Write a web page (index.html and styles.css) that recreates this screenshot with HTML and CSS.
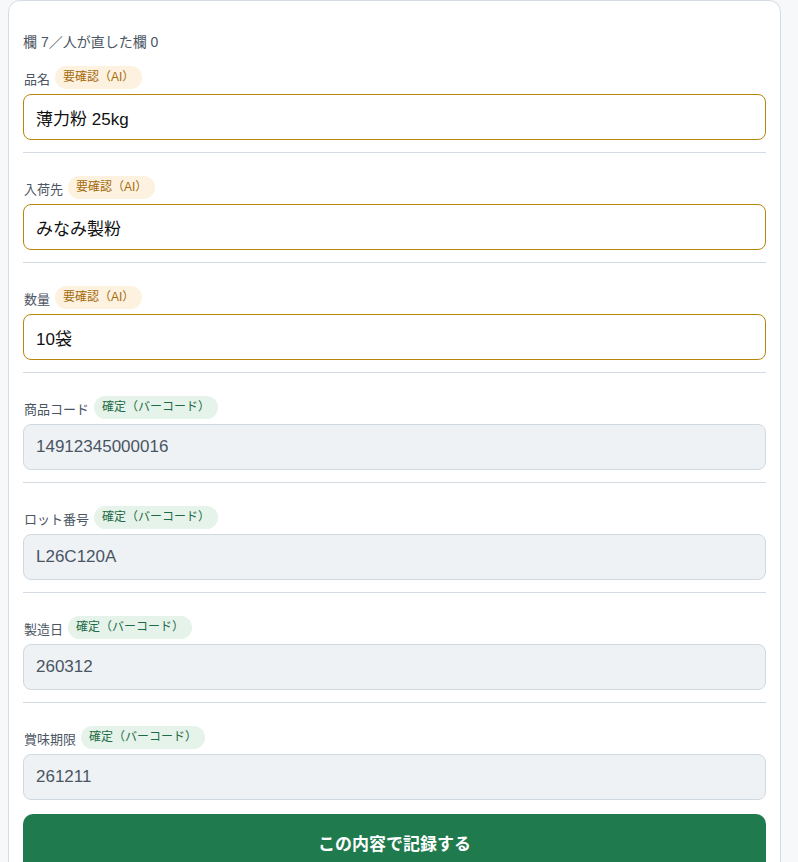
FILE: index.html
```html
<!DOCTYPE html>
<html lang="ja">
<head>
<meta charset="utf-8">
<title>記録確認</title>
<link rel="stylesheet" href="styles.css">
</head>
<body>
<div class="card">
  <div class="summary">欄 7／人が直した欄 0</div>

  <div class="field">
    <div class="label-row"><span class="label">品名</span><span class="badge badge-ai">要確認（AI）</span></div>
    <input class="input input-ai" type="text" value="薄力粉 25kg">
  </div>

  <div class="field">
    <div class="label-row"><span class="label">入荷先</span><span class="badge badge-ai">要確認（AI）</span></div>
    <input class="input input-ai" type="text" value="みなみ製粉">
  </div>

  <div class="field">
    <div class="label-row"><span class="label">数量</span><span class="badge badge-ai">要確認（AI）</span></div>
    <input class="input input-ai" type="text" value="10袋">
  </div>

  <div class="field">
    <div class="label-row"><span class="label">商品コード</span><span class="badge badge-ok">確定（バーコード）</span></div>
    <input class="input input-ok" type="text" value="14912345000016" readonly>
  </div>

  <div class="field">
    <div class="label-row"><span class="label">ロット番号</span><span class="badge badge-ok">確定（バーコード）</span></div>
    <input class="input input-ok" type="text" value="L26C120A" readonly>
  </div>

  <div class="field">
    <div class="label-row"><span class="label">製造日</span><span class="badge badge-ok">確定（バーコード）</span></div>
    <input class="input input-ok" type="text" value="260312" readonly>
  </div>

  <div class="field field-last">
    <div class="label-row"><span class="label">賞味期限</span><span class="badge badge-ok">確定（バーコード）</span></div>
    <input class="input input-ok" type="text" value="261211" readonly>
  </div>

  <button class="submit" type="button">この内容で記録する</button>
</div>
</body>
</html>
```

FILE: styles.css
```css
html, body {
  margin: 0;
  padding: 0;
  background: #f6f8fa;
}

body {
  font-family: "Liberation Sans", "Noto Sans CJK JP", sans-serif;
  color: #1f2933;
}

.card {
  box-sizing: border-box;
  width: 773px;
  margin: 0 0 0 8px;
  background: #ffffff;
  border: 1px solid #d5dbe3;
  border-radius: 12px;
  padding: 31px 14px 40px 14px;
}

.summary {
  font-size: 14px;
  line-height: 20px;
  color: #4b5563;
  margin-bottom: 14px;
}

.field {
  padding-bottom: 12px;
  border-bottom: 1px solid #d5dbe3;
  display: flex;
  flex-direction: column;
  gap: 4px;
}

.field + .field {
  padding-top: 23px;
}

.field-last {
  border-bottom: none;
  padding-bottom: 0;
}

.label-row {
  display: flex;
  align-items: flex-start;
  gap: 5px;
  height: 24px;
  padding-left: 1px;
}

.label {
  font-size: 13px;
  line-height: 20px;
  color: #4b5563;
  padding-top: 4px;
}

.badge {
  font-size: 12px;
  line-height: 23px;
  height: 23px;
  padding: 0 8px;
  border-radius: 12px;
}

.badge-ai {
  background: #fdf2df;
  color: #a66a0c;
}

.badge-ok {
  background: #e5f3ea;
  color: #1e6a44;
}

.input {
  box-sizing: border-box;
  display: block;
  width: 100%;
  height: 46px;
  margin: 0;
  padding: 0 12px;
  border-radius: 8px;
  font-family: "Liberation Sans", "Noto Sans CJK JP", sans-serif;
  font-size: 17px;
  outline: none;
}

.input-ai {
  background: #ffffff;
  border: 1px solid #b8860b;
  color: #111111;
}

.input-ok {
  background: #eef2f5;
  border: 1px solid #d1d9e0;
  color: #4a5563;
}

.submit {
  display: block;
  width: 100%;
  margin-top: 14px;
  height: 58px;
  border: none;
  border-radius: 10px;
  background: #1f7a4d;
  color: #ffffff;
  font-family: "Liberation Sans", "Noto Sans CJK JP", sans-serif;
  font-size: 17px;
  font-weight: bold;
  padding: 0 0 2px 0;
}
```
